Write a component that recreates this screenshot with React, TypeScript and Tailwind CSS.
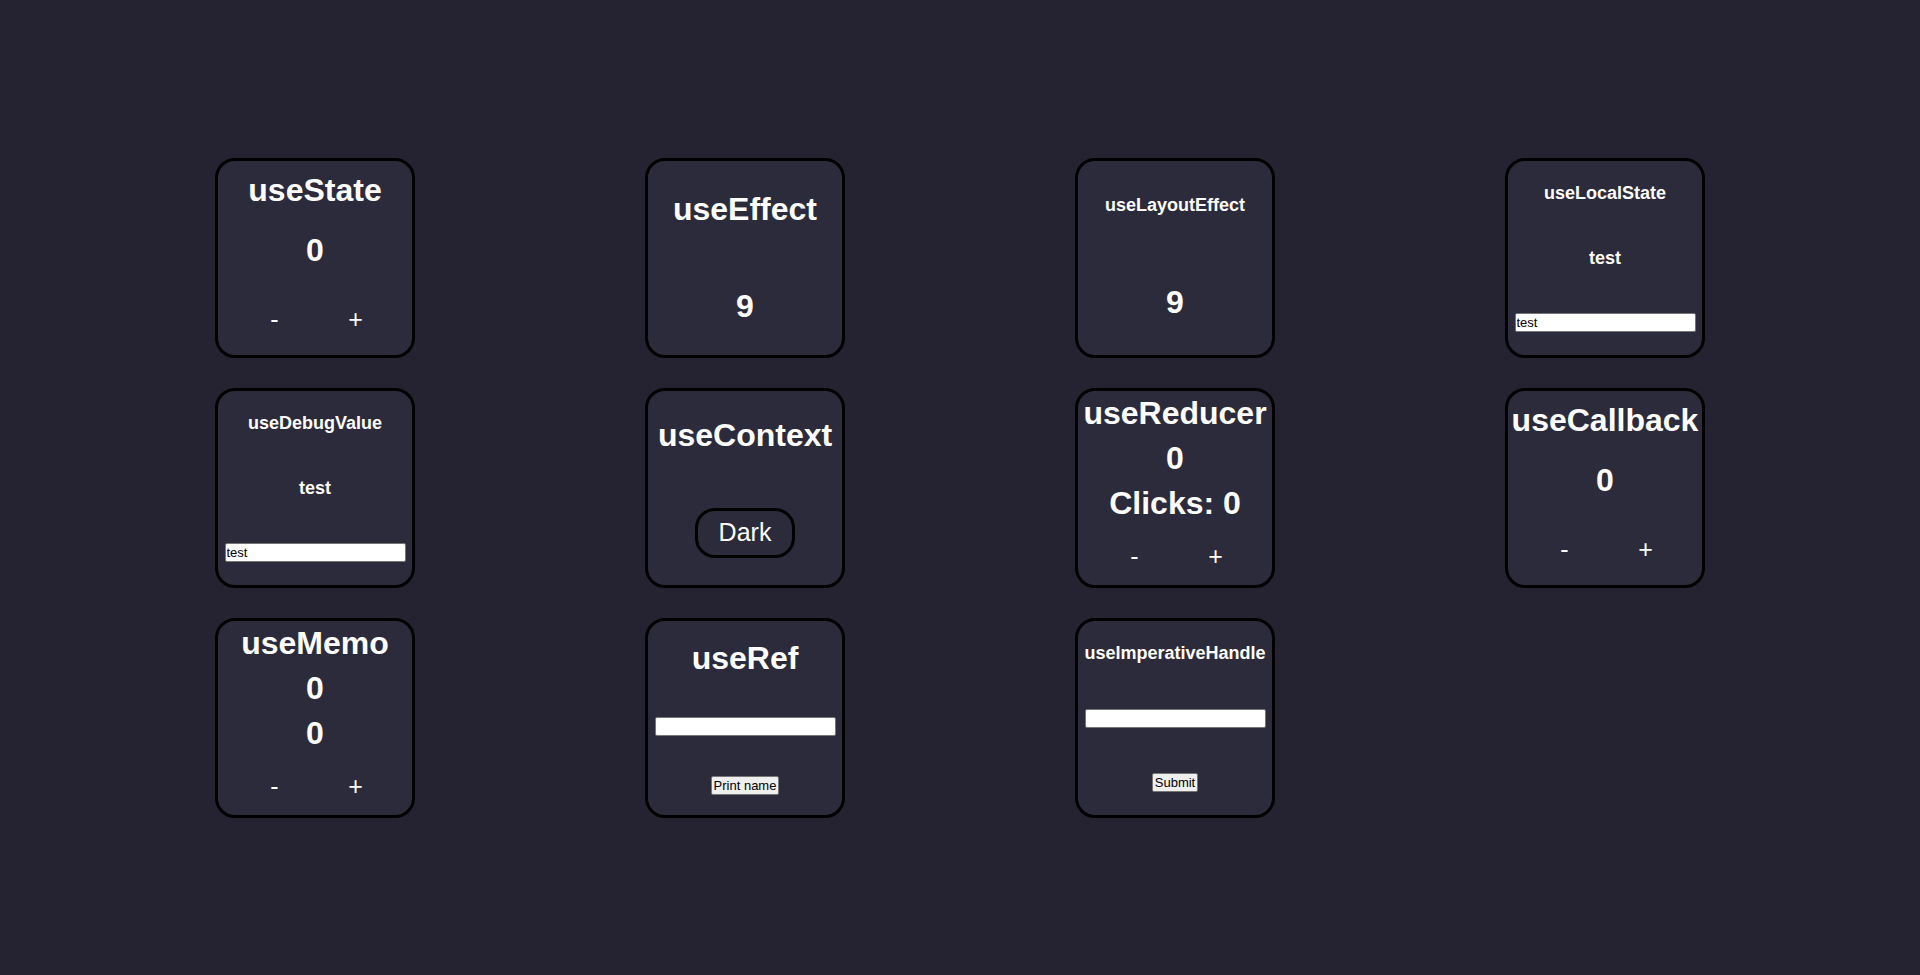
import { useState } from 'react';
import type { ReactNode } from 'react';

const boxInput =
  'h-[19px] w-[181px] rounded-[2px] border border-[#767676] bg-white px-px text-[13px] leading-[17px] text-black outline-none';
const boxButton =
  'h-[19px] rounded-[2px] border border-[#767676] bg-[#efefef] px-0.5 text-[13px] leading-[17px] text-black';

function Card({ children }: { children: ReactNode }) {
  return (
    <section className="flex h-[200px] w-[200px] flex-col items-center justify-around rounded-[20px] border-[3px] border-black bg-[#2c2b3b]">
      {children}
    </section>
  );
}

function Title({ children }: { children: ReactNode }) {
  return <h1 className="text-[32px] leading-[37px] font-bold whitespace-nowrap">{children}</h1>;
}

function Subtitle({ children }: { children: ReactNode }) {
  return <h2 className="text-[18px] leading-[21px] font-bold whitespace-nowrap">{children}</h2>;
}

function Stepper({ onMinus, onPlus }: { onMinus: () => void; onPlus: () => void }) {
  return (
    <div className="flex w-full justify-evenly">
      <button type="button" aria-label="Decrease" onClick={onMinus} className="h-[50px] w-[50px] pt-0.5 text-[25px] leading-7">
        -
      </button>
      <button type="button" aria-label="Increase" onClick={onPlus} className="h-[50px] w-[50px] pt-0.5 text-[25px] leading-7">
        +
      </button>
    </div>
  );
}

function CounterCard({ title }: { title: string }) {
  const [count, setCount] = useState(0);
  return (
    <Card>
      <Title>{title}</Title>
      <Title>{count}</Title>
      <Stepper onMinus={() => setCount(count - 1)} onPlus={() => setCount(count + 1)} />
    </Card>
  );
}

function ReducerCard() {
  const [state, setState] = useState({ count: 0, clicks: 0 });
  const step = (by: number) => setState((s) => ({ count: s.count + by, clicks: s.clicks + 1 }));
  return (
    <Card>
      <Title>useReducer</Title>
      <Title>{state.count}</Title>
      <Title>{`Clicks: ${state.clicks}`}</Title>
      <Stepper onMinus={() => step(-1)} onPlus={() => step(1)} />
    </Card>
  );
}

function MemoCard() {
  const [count, setCount] = useState(0);
  return (
    <Card>
      <Title>useMemo</Title>
      <Title>{count}</Title>
      <Title>{count * 2}</Title>
      <Stepper onMinus={() => setCount(count - 1)} onPlus={() => setCount(count + 1)} />
    </Card>
  );
}

function TextCard({ title }: { title: string }) {
  const [text, setText] = useState('test');
  return (
    <Card>
      <Subtitle>{title}</Subtitle>
      <Subtitle>{text}</Subtitle>
      <input type="text" aria-label={title} value={text} onChange={(e) => setText(e.target.value)} className={boxInput} />
    </Card>
  );
}

function ContextCard() {
  const [dark, setDark] = useState(true);
  return (
    <Card>
      <Title>useContext</Title>
      <button
        type="button"
        onClick={() => setDark(!dark)}
        className="h-[50px] w-[100px] rounded-[20px] border-[3px] border-black pb-0.5 text-[25px] leading-7"
      >
        {dark ? 'Dark' : 'Light'}
      </button>
    </Card>
  );
}

export default function App() {
  return (
    <main className="flex min-h-screen items-center bg-[#252331] px-[100px] font-['Liberation_Sans',Arial,sans-serif] text-white">
      <div className="grid w-full grid-cols-4 justify-items-center gap-y-[30px]">
        <CounterCard title="useState" />
        <Card>
          <Title>useEffect</Title>
          <Title>9</Title>
        </Card>
        <Card>
          <Subtitle>useLayoutEffect</Subtitle>
          <Title>9</Title>
        </Card>
        <TextCard title="useLocalState" />
        <TextCard title="useDebugValue" />
        <ContextCard />
        <ReducerCard />
        <CounterCard title="useCallback" />
        <MemoCard />
        <Card>
          <Title>useRef</Title>
          <input type="text" aria-label="Name" className={boxInput} />
          <button type="button" className={boxButton}>
            Print name
          </button>
        </Card>
        <Card>
          <Subtitle>useImperativeHandle</Subtitle>
          <input type="text" aria-label="Value" className={boxInput} />
          <button type="button" className={boxButton}>
            Submit
          </button>
        </Card>
      </div>
    </main>
  );
}
